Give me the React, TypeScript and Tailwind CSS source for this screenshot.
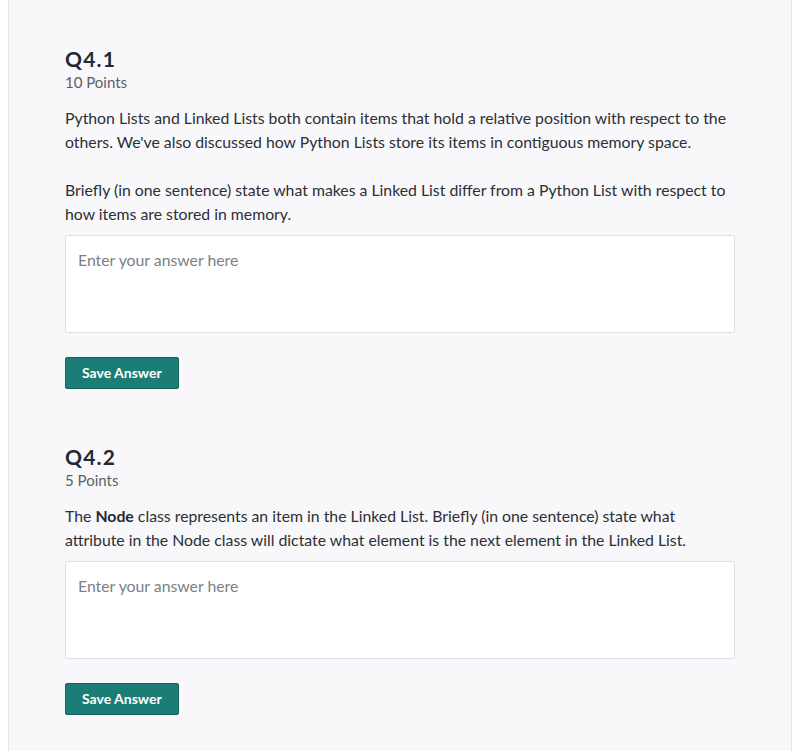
import React from "react";

function Question({ num, points, children }: { num: string; points: string; children: React.ReactNode }) {
  return (
    <div className="flex flex-col">
      <div className="text-[21px] leading-[24px] font-bold tracking-[1.2px] text-[#1f2a33]">{num}</div>
      <div className="text-[15px] leading-[20px] text-[#5b5f66] mt-[1px]">{points}</div>
      <div className="mt-[14px] text-[15.8px] leading-[24px] text-[#2c2f36]">{children}</div>
      <div className="mt-[9px] h-[98px] bg-white border border-[#dedee6] rounded-[2px] px-[12px] pt-[12px] text-[15.8px] leading-[24px] text-[#7b7f87]">
        Enter your answer here
      </div>
      <div className="mt-[24px]">
        <button className="h-[32px] px-[16px] bg-[#1b7d76] border border-[#17615c] rounded-[2px] text-white text-[14px] font-bold leading-none">
          Save Answer
        </button>
      </div>
    </div>
  );
}

export default function App() {
  return (
    <div className="w-[796px] h-[751px] bg-white overflow-hidden" style={{ fontFamily: "Lato, 'Open Sans', sans-serif" }}>
      <div className="ml-[8px] w-[784px] h-[751px] bg-[#f8f8fa] border-l border-r border-[#e4e4ea] pl-[56px] pr-[56px] pt-[47px] flex flex-col gap-[56px]">
        <Question num="Q4.1" points="10 Points">
          <p>
            Python Lists and Linked Lists both contain items that hold a relative position with respect to the others. We've also discussed how Python Lists store its items in contiguous memory space.
          </p>
          <p className="mt-[24px]">
            Briefly (in one sentence) state what makes a Linked List differ from a Python List with respect to how items are stored in memory.
          </p>
        </Question>
        <Question num="Q4.2" points="5 Points">
          <p>
            The <b className="font-bold text-[#1f2a33]">Node</b> class represents an item in the Linked List. Briefly (in one sentence) state what attribute in the Node class will dictate what element is the next element in the Linked List.
          </p>
        </Question>
      </div>
    </div>
  );
}
